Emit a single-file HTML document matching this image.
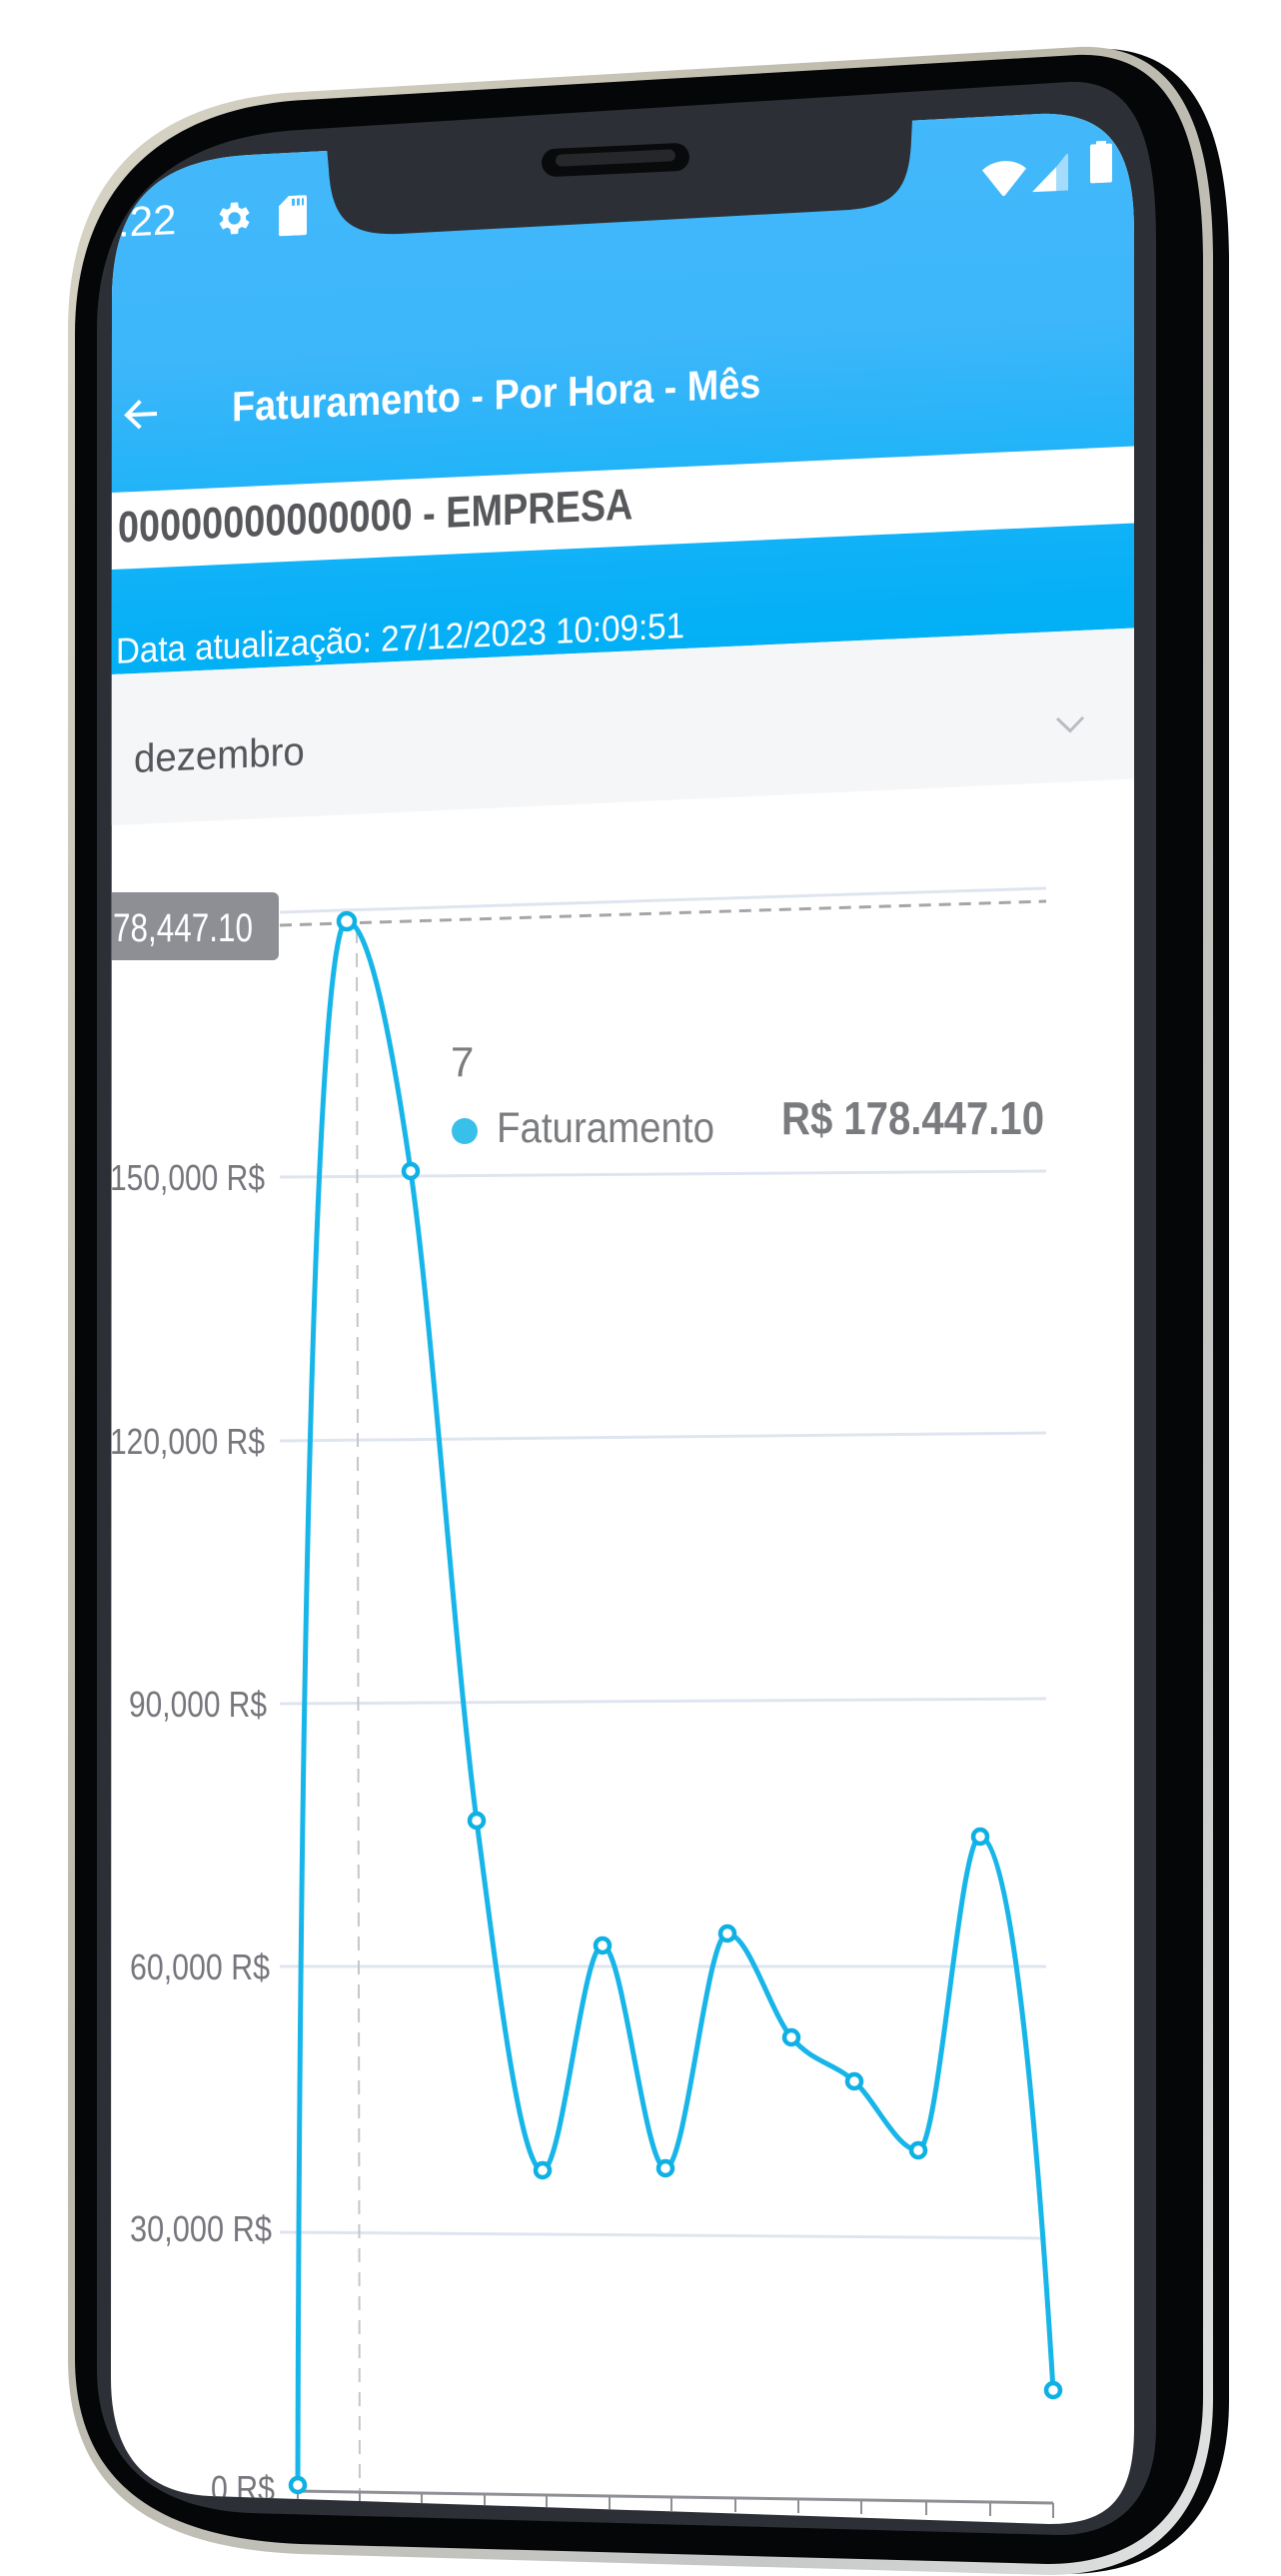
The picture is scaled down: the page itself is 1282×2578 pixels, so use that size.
<!DOCTYPE html>
<html><head><meta charset="utf-8"><style>
html,body{margin:0;padding:0;background:#fff;width:1282px;height:2578px;overflow:hidden;font-family:"Liberation Sans",sans-serif}
.abs{position:absolute}
#screen{position:absolute;left:0;top:0;width:1282px;height:2578px;clip-path:path("M112,300 C112,200 160,160 250,155 L1040,114 C1110,112 1135,150 1135,230 L1135,2430 C1135,2500 1110,2526 1050,2526 L210,2498 C140,2495 111,2450 111,2380 Z");}
#sk{position:absolute;left:0;top:0;width:1282px;height:1000px;transform:skewY(-2.6deg);transform-origin:112px 0}
.t{position:absolute;white-space:nowrap;transform-origin:0 50%}
</style></head><body>
<svg class="abs" style="left:0;top:0" width="1282" height="2578">
<defs>
<linearGradient id="rim" x1="0" y1="0" x2="1" y2="1">
<stop offset="0" stop-color="#d8d4c6"/><stop offset=".4" stop-color="#bcb8aa"/><stop offset=".8" stop-color="#c6c8c8"/><stop offset="1" stop-color="#e2e4e4"/></linearGradient>
</defs>
<path transform="translate(16,2)" d="M68,330 C68,180 150,100 300,92 L1080,47 C1170,44 1214,110 1214,260 L1214,2400 C1214,2520 1150,2574 1050,2574 L300,2554 C150,2548 68,2490 68,2360 Z" fill="#060708"/>
<path d="M68,330 C68,180 150,100 300,92 L1080,47 C1170,44 1214,110 1214,260 L1214,2400 C1214,2520 1150,2577 1050,2577 L300,2556 C150,2550 68,2490 68,2360 Z" fill="url(#rim)"/>
<path d="M75,335 C75,195 155,108 305,100 L1078,55 C1162,52 1204,116 1204,262 L1204,2398 C1204,2510 1145,2566 1048,2566 L300,2546 C158,2540 75,2484 75,2360 Z" fill="#050607"/>
<path d="M97,330 C97,215 160,138 300,130 L1070,82 C1130,80 1157,125 1157,240 L1157,2430 C1157,2500 1120,2537 1060,2537 L250,2515 C150,2510 97,2460 97,2370 Z" fill="#2c2f35"/>
</svg>
<div id="screen">
<div class="abs" style="left:0;top:0;width:1282px;height:2578px;background:#fff"></div>
<div id="sk">
<div class="abs" style="left:100px;top:-100px;width:1100px;height:775px;background:linear-gradient(#4abbfb 0%,#3db6fa 60%,#0cb1f7 90%,#02b0f6 100%)"></div>
<div class="abs" style="left:100px;top:493px;width:1100px;height:77px;background:#fff"></div>
<div class="abs" style="left:100px;top:675px;width:1100px;height:151px;background:#f5f6f8"></div>
<div class="t" style="left:118px;top:198px;font-size:42px;color:#fff;line-height:50px">:22</div>
<svg class="abs" style="left:212px;top:203px" width="42" height="42" viewBox="0 0 24 24"><path fill="#fff" d="M19.4 13a7.5 7.5 0 0 0 0-2l2.1-1.6-2-3.5-2.5 1a7 7 0 0 0-1.7-1L14.9 3h-4l-.4 2.9a7 7 0 0 0-1.7 1l-2.5-1-2 3.5L6.4 11a7.5 7.5 0 0 0 0 2l-2.1 1.6 2 3.5 2.5-1a7 7 0 0 0 1.7 1l.4 2.9h4l.4-2.9a7 7 0 0 0 1.7-1l2.5 1 2-3.5zM12.9 15.5a3.5 3.5 0 1 1 0-7 3.5 3.5 0 0 1 0 7z"/></svg>
<svg class="abs" style="left:279px;top:204px" width="28" height="40" viewBox="0 0 28 40"><path fill="#fff" d="M10 0H26a2 2 0 0 1 2 2V38a2 2 0 0 1-2 2H2a2 2 0 0 1-2-2V10z"/><rect x="13" y="3" width="3" height="7" fill="#47baf9"/><rect x="18" y="3" width="3" height="7" fill="#47baf9"/><rect x="23" y="3" width="2" height="7" fill="#47baf9"/></svg>
<svg class="abs" style="left:983px;top:198px" width="44" height="40" viewBox="0 0 44 40"><path fill="#fff" d="M0 12 C12 1 32 1 44 12 L23 38 a2 2 0 0 1-3 0z"/></svg>
<svg class="abs" style="left:1033px;top:194px" width="40" height="44" viewBox="0 0 40 44"><path fill="#fff" d="M0 40 L24 16 L24 40z"/><path fill="#a6dcfb" d="M24 16 L34 4 Q36 2 36 6 L36 40 L24 40z"/></svg>
<svg class="abs" style="left:1091px;top:186px" width="22" height="42"><rect x="6" y="0" width="10" height="4" fill="#fff"/><rect x="0" y="3" width="22" height="39" rx="2" fill="#fff"/></svg>
<svg class="abs" style="left:122px;top:396px" width="40" height="40" viewBox="0 0 24 24"><path fill="none" stroke="#fff" stroke-width="2.4" d="M21 12H4M11 4l-8 8 8 8"/></svg>
<div class="t" style="left:232px;top:388px;font-size:42px;font-weight:bold;color:#fff;line-height:50px;transform:scaleX(.9)">Faturamento - Por Hora - Mês</div>
<div class="t" style="left:118px;top:504px;font-size:44px;font-weight:bold;color:#57585c;line-height:50px;transform:scaleX(.86)">00000000000000 - EMPRESA</div>
<div class="t" style="left:116px;top:630px;font-size:36px;color:#fff;line-height:44px;transform:scaleX(.92)">Data atualização: 27/12/2023 10:09:51</div>
<div class="t" style="left:134px;top:736px;font-size:40px;color:#55565a;line-height:50px;transform:scaleX(.96)">dezembro</div>
<svg class="abs" style="left:1056px;top:760px" width="30" height="18"><path d="M2 2 L15 15 L28 2" fill="none" stroke="#b9bcc2" stroke-width="3"/></svg>
</div>
<svg class="abs" style="left:0;top:0" width="1282" height="2578">
<g stroke="#dfe5ef" stroke-width="3">
<line x1="280" y1="913" x2="1047" y2="889"/>
<line x1="280" y1="1178" x2="1047" y2="1172"/>
<line x1="280" y1="1442" x2="1047" y2="1434"/>
<line x1="280" y1="1705" x2="1047" y2="1700"/>
<line x1="280" y1="1968" x2="1047" y2="1968"/>
<line x1="280" y1="2234" x2="1047" y2="2240"/>
</g>
<line x1="280" y1="926" x2="1047" y2="902" stroke="#a6a6a8" stroke-width="3" stroke-dasharray="12 8"/>
<line x1="357" y1="930" x2="360" y2="2500" stroke="#c4c6ca" stroke-width="2" stroke-dasharray="14 10"/>
<line x1="296" y1="2493" x2="1054" y2="2505" stroke="#8d8f94" stroke-width="3"/>
<g stroke="#8d8f94" stroke-width="2">
<line x1="298" y1="2493" x2="298" y2="2506"/><line x1="360" y1="2494" x2="360" y2="2508"/><line x1="422" y1="2495" x2="422" y2="2509"/><line x1="485" y1="2496" x2="485" y2="2510"/><line x1="547" y1="2497" x2="547" y2="2511"/><line x1="610" y1="2498" x2="610" y2="2512"/><line x1="672" y1="2499" x2="672" y2="2513"/><line x1="736" y1="2500" x2="736" y2="2514"/><line x1="799" y1="2501" x2="799" y2="2515"/><line x1="862" y1="2502" x2="862" y2="2516"/><line x1="927" y1="2503" x2="927" y2="2517"/><line x1="991" y1="2504" x2="991" y2="2518"/><line x1="1054" y1="2505" x2="1054" y2="2520"/>
</g>
<g font-family="Liberation Sans,sans-serif" font-size="36" fill="#76777d" text-anchor="end">
<text x="265" y="1191" textLength="155" lengthAdjust="spacingAndGlyphs">150,000 R$</text>
<text x="265" y="1455" textLength="155" lengthAdjust="spacingAndGlyphs">120,000 R$</text>
<text x="267" y="1718" textLength="138" lengthAdjust="spacingAndGlyphs">90,000 R$</text>
<text x="270" y="1981" textLength="140" lengthAdjust="spacingAndGlyphs">60,000 R$</text>
<text x="272" y="2243" textLength="142" lengthAdjust="spacingAndGlyphs">30,000 R$</text>
<text x="275" y="2503" textLength="64" lengthAdjust="spacingAndGlyphs">0 R$</text>
</g>
<rect x="100" y="893" width="179" height="68" rx="6" fill="#8d8f95"/>
<text x="113" y="942" font-family="Liberation Sans,sans-serif" font-size="40" fill="#fff" textLength="140" lengthAdjust="spacingAndGlyphs">78,447.10</text>
<path fill="none" stroke="#17b5e8" stroke-width="5" d="M298,2487 C300,1600 318,922 347,922 C368,922 390,1027 411,1172 C433,1324 455,1655 477,1822 C499,1989 521,2172 543,2172 C563,2172 583,1947 603,1947 C624,1947 645,2170 666,2170 C687,2170 707,1935 728,1935 C749,1935 771,2014 792,2039 C813,2064 834,2064 855,2083 C876,2102 898,2152 919,2152 C940,2152 960,1838 981,1838 C1004,1838 1030,2000 1054,2392"/>
<g fill="#fff" stroke="#0fb0e3" stroke-width="4.5">
<circle cx="298" cy="2487" r="7"/><circle cx="347" cy="922" r="8"/><circle cx="411" cy="1172" r="7"/><circle cx="477" cy="1822" r="7"/><circle cx="543" cy="2172" r="7"/><circle cx="603" cy="1947" r="7"/><circle cx="666" cy="2170" r="7"/><circle cx="728" cy="1935" r="7"/><circle cx="792" cy="2039" r="7"/><circle cx="855" cy="2083" r="7"/><circle cx="919" cy="2152" r="7"/><circle cx="981" cy="1838" r="7"/><circle cx="1054" cy="2392" r="7"/>
</g>
<text x="451" y="1077" font-family="Liberation Sans,sans-serif" font-size="42" fill="#7b7c80">7</text>
<circle cx="465" cy="1132" r="13" fill="#38c0ea"/>
<text x="497" y="1143" font-family="Liberation Sans,sans-serif" font-size="43" fill="#7b7c80" textLength="218" lengthAdjust="spacingAndGlyphs">Faturamento</text>
<text x="782" y="1135" font-family="Liberation Sans,sans-serif" font-size="46" font-weight="bold" fill="#7a7b7f" textLength="263" lengthAdjust="spacingAndGlyphs">R$ 178.447.10</text>
</svg>
</div>
<svg class="abs" style="left:0;top:0" width="1282" height="2578">
<path d="M326,135 L329,170 C332,220 350,236 400,234 L850,210 C895,206 910,190 912,140 L914,100 Z" fill="#2c2f35"/>
<rect x="542" y="146" width="148" height="28" rx="14" fill="#090a0c" transform="rotate(-2.6 616 160)"/>
<rect x="556" y="152" width="120" height="12" rx="6" fill="#25272b" transform="rotate(-2.6 616 160)"/>
</svg>
</body></html>
